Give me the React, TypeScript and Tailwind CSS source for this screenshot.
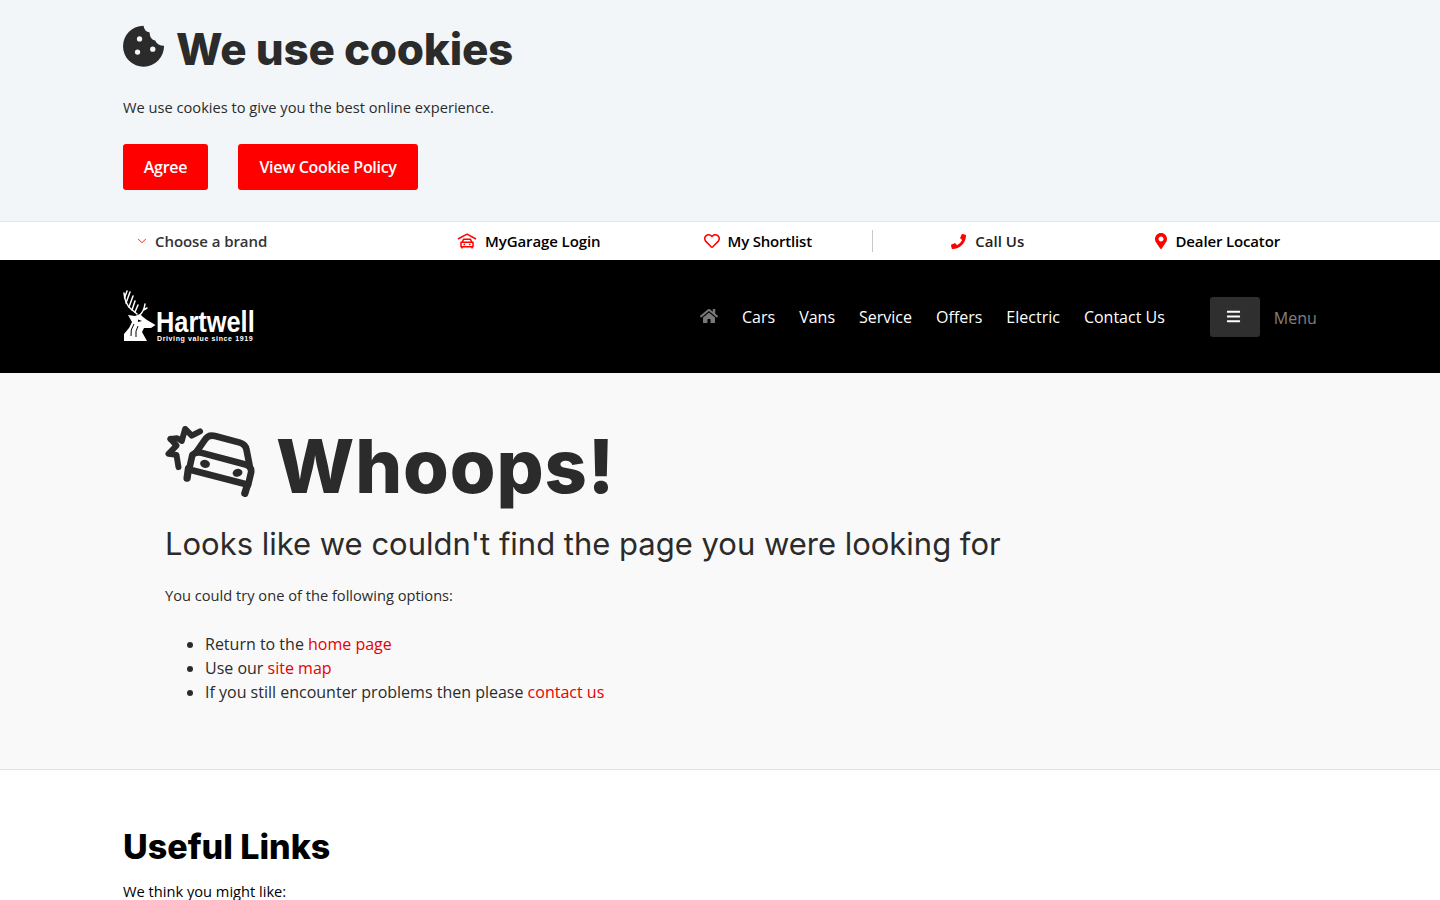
import React from "react";
import { FaHome, FaBars, FaPhoneAlt, FaMapMarkerAlt, FaRegHeart } from "react-icons/fa";
import { ChevronDown } from "lucide-react";

function CookieIcon() {
  return (
    <svg width="42" height="42" viewBox="23 15 127 127" className="shrink-0 -mt-[6px]">
      <path d="M85 17Q88 35 103 37Q105 60 120 62Q128 78 147 78A62 62 0 1 1 85 17Z" fill="#2b2b2b" />
      <circle cx="73" cy="57" r="8" fill="#f2f6f9" />
      <circle cx="67" cy="97" r="8" fill="#f2f6f9" />
      <circle cx="113" cy="88" r="8" fill="#f2f6f9" />
    </svg>
  );
}

function GarageIcon() {
  return (
    <svg width="20" height="16" viewBox="0 0 20 16" fill="none" stroke="#ff0000" strokeWidth="1.5">
      <path d="M1 6 10 1.2 19 6" strokeLinejoin="round" />
      <path d="M5.2 9.5 6.5 6.2h7l1.3 3.3" strokeLinejoin="round" />
      <path d="M4 9.3h12v4.4H4ZM5 13.5v2M15 13.5v2" strokeLinejoin="round" />
      <path d="M6.5 11.5h1.6M11.9 11.5h1.6" />
    </svg>
  );
}

function CrashIcon() {
  return (
    <svg width="90" height="73" viewBox="30 25 270 220" fill="none" stroke="#2b2b2b" strokeLinecap="round" strokeLinejoin="round" className="shrink-0 -mt-[14px]">
      <path d="M46 70 66 68 80 76 90 40 110 60 135 47" strokeWidth="18" />
      <path d="M46 70 64 90 40 115 64 118 70 155" strokeWidth="18" />
      <path d="M122 112 150 72Q160 56 180 61L255 81Q272 86 275 102L284 148" strokeWidth="20" />
      <path d="M112 118Q122 108 140 112L275 148Q291 154 289 170L280 208 102 162Z" strokeWidth="20" />
      <path d="M100 160 96 188M278 208 270 234" strokeWidth="22" />
      <ellipse cx="150" cy="145" rx="15" ry="12" transform="rotate(15 150 145)" fill="#2b2b2b" stroke="none" />
      <ellipse cx="248" cy="172" rx="15" ry="12" transform="rotate(-15 248 172)" fill="#2b2b2b" stroke="none" />
    </svg>
  );
}

function Logo() {
  return (
    <div className="relative w-[131px] h-[54px] text-white">
      <svg width="36" height="54" viewBox="0 0 36 54" className="absolute left-0 top-0">
        <g fill="none" stroke="white" strokeWidth="1.5" strokeLinecap="round">
          <path d="M1 3Q2 14 8 19L14 24" />
          <path d="M1.5 8 4 1M3 13 7 2M6 17 10 6M9 20 12 11M12 22 15 15" />
          <path d="M22 14Q21 21 17 25M20.500 20 24 18" />
        </g>
        <path d="M5 25 12 26 17 24 20 27 24 30 32.500 35 28 38 21 38 19 42 24 51 1 51 1 44 6 38 9 32Z" fill="white" />
        <path d="M15 29.500 19 31 15 32Z" fill="black" />
        <path d="M11 34Q7 40 8 46M15 36Q12 41 13 47" fill="none" stroke="black" strokeWidth="1" />
      </svg>
      <span className="absolute left-[33px] top-[21px] text-[29px] leading-[22px] font-bold font-['Liberation_Sans',sans-serif] whitespace-nowrap origin-left scale-x-[0.875]">Hartwell</span>
      <span className="absolute left-[34px] top-[45px] text-[7px] leading-[8px] font-bold tracking-[0.62px] font-['Liberation_Sans',sans-serif] whitespace-nowrap">Driving value since 1919</span>
    </div>
  );
}

const utilCol = "w-[229.5px] shrink-0 flex items-center justify-center";

export default function App() {
  return (
    <div className="font-['Open_Sans',sans-serif] text-[#2b2b2b] h-[900px] overflow-hidden bg-white">
      <section className="bg-[#f2f6f9] h-[221px] pl-[123px] pt-[25px]">
        <div className="flex items-center h-[48px] gap-[11px]">
          <CookieIcon />
          <h2 className="font-['Inter',sans-serif] font-extrabold text-[44px] leading-[48px] tracking-[-0.25px]">We use cookies</h2>
        </div>
        <p className="text-[14.65px] leading-[22px] mt-[23px]">We use cookies to give you the best online experience.</p>
        <div className="flex gap-[30px] mt-[26px]">
          <a className="h-[46px] w-[85px] flex items-center justify-center rounded-[3px] bg-[#ff0000] text-white text-[16px] font-semibold tracking-[-0.3px]">Agree</a>
          <a className="h-[46px] w-[180px] flex items-center justify-center rounded-[3px] bg-[#ff0000] text-white text-[16px] font-semibold tracking-[-0.3px]">View Cookie Policy</a>
        </div>
      </section>

      <nav className="h-[39px] border-t border-[#e6e6e6] bg-white flex pl-[123px] text-[15px] font-semibold">
        <div className="w-[291px] shrink-0 pl-[12px] flex items-center gap-[6px] text-[#333]">
          <ChevronDown size={14} strokeWidth={1.5} className="text-[#ff0000]" />
          <span className="tracking-[-0.07px]">Choose a brand</span>
        </div>
        <div className={utilCol + " gap-[8px] text-black"}><GarageIcon /><span className="tracking-[-0.1px]">MyGarage Login</span></div>
        <div className={utilCol + " gap-[8px] text-black border-r border-[#c8c8c8] my-[8px]"}><FaRegHeart className="text-[16px] text-[#ff0000]" /><span className="tracking-[-0.2px]">My Shortlist</span></div>
        <div className={utilCol + " gap-[9px] text-[#222]"}><FaPhoneAlt className="text-[15px] text-[#ff0000] -scale-x-100" /><span>Call Us</span></div>
        <div className={utilCol + " gap-[7px] text-black pr-[2px]"}><FaMapMarkerAlt className="text-[16px] text-[#ff0000]" /><span className="tracking-[-0.15px]">Dealer Locator</span></div>
      </nav>

      <header className="h-[113px] bg-black flex items-center pl-[123px]">
        <div><Logo /></div>
        <div className="ml-[446px] flex items-center gap-[24px] text-[16px] text-white">
          <FaHome className="text-[18px] text-[#777] -mt-[2px]" />
          <span>Cars</span>
          <span>Vans</span>
          <span>Service</span>
          <span>Offers</span>
          <span>Electric</span>
          <span>Contact Us</span>
        </div>
        <button className="ml-[45px] w-[50px] h-[40px] bg-[#2f2f2f] rounded-[3px] flex items-center justify-center text-white pr-[2px]"><FaBars className="text-[15px]" /></button>
        <span className="ml-[14px] text-[16px] text-[#808080] mt-[2px]">Menu</span>
      </header>

      <main className="h-[397px] bg-[#f9f9f9] border-b border-[#e3e3e3] pl-[165px] pt-[52px]">
        <div className="flex items-center gap-[21px] h-[84px]">
          <CrashIcon />
          <h1 className="font-['Inter',sans-serif] font-extrabold text-[74px] leading-[84px] tracking-[0.85px] -mt-[2px]">Whoops!</h1>
        </div>
        <h2 className="font-['Inter',sans-serif] font-normal text-[31px] leading-[40px] tracking-[-0.01px] mt-[15px]">Looks like we couldn't find the page you were looking for</h2>
        <p className="text-[14.65px] leading-[22px] mt-[20px]">You could try one of the following options:</p>
        <ul className="list-disc pl-[40px] mt-[26px] text-[16px] leading-[24px]">
          <li>Return to the <a className="text-[#e60000]">home page</a></li>
          <li>Use our <a className="text-[#e60000]">site map</a></li>
          <li>If you still encounter problems then please <a className="text-[#e60000]">contact us</a></li>
        </ul>
      </main>

      <section className="pl-[123px] pt-[55px] text-black">
        <h2 className="font-['Inter',sans-serif] font-extrabold text-[34px] leading-[44px]">Useful Links</h2>
        <p className="text-[14.65px] leading-[22px] mt-[11px]">We think you might like:</p>
      </section>
    </div>
  );
}
